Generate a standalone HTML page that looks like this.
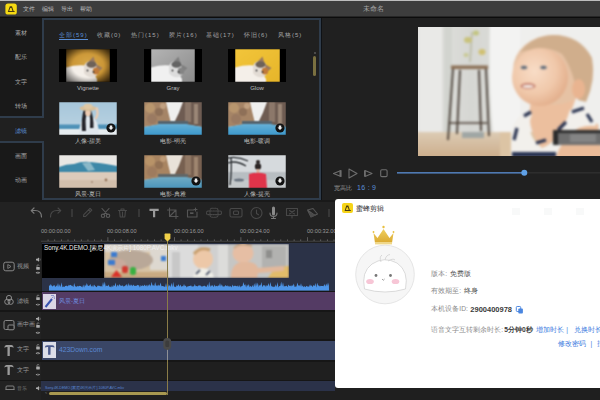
<!DOCTYPE html>
<html><head><meta charset="utf-8">
<style>
*{margin:0;padding:0;box-sizing:border-box}
html,body{width:600px;height:400px;overflow:hidden;background:#1c1c1c;font-family:"Liberation Sans",sans-serif;color:#cfcfcf}
.a{position:absolute}
.t{position:absolute;white-space:nowrap;line-height:1}
</style></head><body>
<!-- title bar -->
<div class="a" style="left:0;top:0;width:600px;height:2px;background:#bdbdbd"></div>
<div class="a" style="left:0;top:1px;width:600px;height:16px;background:#3d3d3d"></div>
<div class="a" style="left:0;top:16px;width:600px;height:1px;background:#262626"></div><div class="a" style="left:0;top:17px;width:600px;height:1px;background:#0c0c0c"></div>
<svg class="a" style="left:5px;top:3px" width="12" height="12" viewBox="0 0 12 12"><rect x="0.4" y="0.4" width="11.4" height="11.2" rx="2.6" fill="#f6da12"/><path d="M4.8 3.2 L7 3.2 L8.6 8 L10 8.3 L9.4 9 L2.8 9 Z M5.3 5 L4.2 8 L7.4 8 L6.5 5Z" fill="#4a3c10" fill-rule="evenodd"/></svg>
<div class="t" style="left:23px;top:6px;font-size:6px;color:#bdbdbd">文件</div>
<div class="t" style="left:42px;top:6px;font-size:6px;color:#bdbdbd">编辑</div>
<div class="t" style="left:61px;top:6px;font-size:6px;color:#bdbdbd">导出</div>
<div class="t" style="left:80px;top:6px;font-size:6px;color:#bdbdbd">帮助</div>
<div class="t" style="left:363px;top:5px;font-size:7px;color:#a8a8a8">未命名</div>

<!-- sidebar -->
<div class="a" style="left:0;top:18px;width:44px;height:100px;background:#191919;border-right:2px solid #2f3c4b;border-bottom:2px solid #2f3c4b"></div>
<div class="a" style="left:0;top:118px;width:44px;height:23px;background:#202020"></div>
<div class="a" style="left:0;top:141px;width:44px;height:59px;background:#191919;border-right:2px solid #2f3c4b;border-top:2px solid #2f3c4b"></div>
<div class="t" style="left:15px;top:30px;font-size:6px;color:#a9a9a9">素材</div>
<div class="t" style="left:15px;top:54px;font-size:6px;color:#a9a9a9">配乐</div>
<div class="t" style="left:15px;top:79px;font-size:6px;color:#a9a9a9">文字</div>
<div class="t" style="left:15px;top:103px;font-size:6px;color:#a9a9a9">转场</div>
<div class="t" style="left:15px;top:128px;font-size:6px;color:#5b8fd6">滤镜</div>
<div class="t" style="left:15px;top:153px;font-size:6px;color:#a9a9a9">画面</div>
<div class="t" style="left:15px;top:177px;font-size:6px;color:#a9a9a9">动画</div>

<!-- filter panel -->
<div class="a" style="left:44px;top:18px;width:277px;height:182px;background:#202020;border-top:2px solid #2f3c4b;border-right:2px solid #2f3c4b;border-bottom:2px solid #2f3c4b"></div>
<div class="a" style="left:321px;top:18px;width:1.5px;height:183px;background:#0e1115"></div>
<!-- tabs -->
<div class="t" style="left:59px;top:32px;font-size:6px;color:#5b8fd6;letter-spacing:1px">全部(59)</div>
<div class="a" style="left:59px;top:39px;width:29px;height:1px;background:#5b8fd6"></div>
<div class="t" style="left:97px;top:32px;font-size:6px;color:#a5a5a5;letter-spacing:1px">收藏(0)</div>
<div class="t" style="left:131px;top:32px;font-size:6px;color:#a5a5a5;letter-spacing:1px">热门(15)</div>
<div class="t" style="left:169px;top:32px;font-size:6px;color:#a5a5a5;letter-spacing:1px">胶片(16)</div>
<div class="t" style="left:206px;top:32px;font-size:6px;color:#a5a5a5;letter-spacing:1px">基础(17)</div>
<div class="t" style="left:244px;top:32px;font-size:6px;color:#a5a5a5;letter-spacing:1px">怀旧(6)</div>
<div class="t" style="left:278px;top:32px;font-size:6px;color:#a5a5a5;letter-spacing:1px">风格(5)</div>
<!-- scrollbar -->
<div class="a" style="left:313px;top:56px;width:3px;height:20px;background:#7a7040;border-radius:1.5px"></div>
<div class="a" style="left:314px;top:52px;width:1.5px;height:1.5px;background:#4a4a4a"></div>

<svg class="a" style="left:0;top:0" width="600" height="400" viewBox="0 0 600 400">
<defs>
<filter id="bl" x="-10%" y="-10%" width="120%" height="120%" color-interpolation-filters="sRGB"><feConvolveMatrix order="3" kernelMatrix="1 2 1 2 4 2 1 2 1" edgeMode="duplicate"/></filter>
<radialGradient id="vig" cx="50%" cy="50%" r="65%"><stop offset="55%" stop-color="#000" stop-opacity="0"/><stop offset="100%" stop-color="#000" stop-opacity="0.6"/></radialGradient>
<radialGradient id="gold" cx="50%" cy="45%" r="70%"><stop offset="0" stop-color="#d8a848"/><stop offset="0.6" stop-color="#c99434"/><stop offset="1" stop-color="#8a6020"/></radialGradient>
<linearGradient id="gray" x1="0" y1="0" x2="1" y2="1"><stop offset="0" stop-color="#b4b4b4"/><stop offset="1" stop-color="#8a8a8a"/></linearGradient>
<linearGradient id="glow" x1="0" y1="0" x2="1" y2="1"><stop offset="0" stop-color="#f2c53a"/><stop offset="1" stop-color="#e6b52a"/></linearGradient>
<clipPath id="c1"><rect x="66" y="49" width="44" height="33"/></clipPath>
<clipPath id="c2"><rect x="151" y="49" width="44" height="33"/></clipPath>
<clipPath id="c3"><rect x="235" y="49" width="45" height="33"/></clipPath>
<g id="cat">
  <path d="M0 18.5 Q10 15.5 19 16.5 L26 22 L31 30 L31 33 L0 33Z" fill="#f4efe9"/>
  <path d="M18 17 Q20 12 25 12 Q31 13 33 19 Q33 26 28 28 Q21 29 18 24Z" fill="#e2dbd4"/>
  <path d="M20.5 15 L27.5 7.5 L29.5 14Z" fill="#9a7a60"/>
  <path d="M30 15 L36.5 19 L31 24Z" fill="#9a7a60"/>
  <ellipse cx="25.5" cy="15.5" rx="5" ry="3.2" fill="#6e6258"/>
  <ellipse cx="30" cy="22" rx="3.2" ry="3.6" fill="#c07a3a"/>
  <circle cx="21.5" cy="21.5" r="0.9" fill="#3a3a3a"/><circle cx="27.5" cy="23" r="0.9" fill="#3a3a3a"/>
</g>
</defs>
<!-- row1 -->
<rect x="59" y="49" width="58" height="33" fill="#000"/>
<g clip-path="url(#c1)" filter="url(#bl)"><rect x="66" y="49" width="44" height="33" fill="url(#gold)"/><use href="#cat" x="66" y="49"/><rect x="66" y="49" width="44" height="33" fill="url(#vig)"/></g>
<rect x="144" y="49" width="58" height="33" fill="#000"/>
<g clip-path="url(#c2)" filter="url(#bl)"><rect x="151" y="49" width="44" height="33" fill="url(#gray)"/><g style="filter:grayscale(1)"><use href="#cat" x="151" y="49"/></g></g>
<rect x="228" y="49" width="58" height="33" fill="#000"/>
<g clip-path="url(#c3)" filter="url(#bl)"><rect x="235" y="49" width="45" height="33" fill="url(#glow)"/><use href="#cat" x="235" y="49"/></g>
</svg>
<div class="t" style="left:59px;top:85px;width:58px;text-align:center;font-size:6px;color:#bdbdbd">Vignette</div>
<div class="t" style="left:144px;top:85px;width:58px;text-align:center;font-size:6px;color:#bdbdbd">Gray</div>
<div class="t" style="left:228px;top:85px;width:58px;text-align:center;font-size:6px;color:#bdbdbd">Glow</div>


<svg class="a" style="left:0;top:0" width="600" height="400" viewBox="0 0 600 400">
<defs>
<filter id="bl2" x="-10%" y="-10%" width="120%" height="120%" color-interpolation-filters="sRGB"><feConvolveMatrix order="3" kernelMatrix="1 2 1 2 4 2 1 2 1" edgeMode="duplicate"/></filter>
<linearGradient id="sky1" x1="0" y1="0" x2="0" y2="1"><stop offset="0" stop-color="#a6c6da"/><stop offset="0.7" stop-color="#b6d0e0"/><stop offset="1" stop-color="#c6dae6"/></linearGradient>
<linearGradient id="road" x1="0" y1="0" x2="0" y2="1"><stop offset="0" stop-color="#6cb4d8"/><stop offset="1" stop-color="#3c98cc"/></linearGradient>
<clipPath id="r2c1"><rect x="59" y="102" width="58" height="33"/></clipPath>
<clipPath id="r2c2"><rect x="144" y="102" width="58" height="33"/></clipPath>
<clipPath id="r2c3"><rect x="228" y="102" width="58" height="33"/></clipPath>
<clipPath id="r3c1"><rect x="59" y="155" width="58" height="33"/></clipPath>
<clipPath id="r3c2"><rect x="144" y="155" width="58" height="33"/></clipPath>
<clipPath id="r3c3"><rect x="228" y="155" width="58" height="33"/></clipPath>
<g id="street">
  <rect x="0" y="0" width="58" height="33" fill="#efefee"/>
  <path d="M0 0 L22 0 Q24 10 27 21 L0 25Z" fill="#a58466"/>
  <circle cx="6" cy="6" r="5" fill="#b8966e"/><circle cx="15" cy="10" r="4" fill="#8e7058"/><circle cx="8" cy="17" r="5" fill="#9a7a62"/><circle cx="19" cy="4" r="3" fill="#c0a080"/>
  <path d="M39 0 L58 0 L58 25 L30 21 Q35 12 39 0Z" fill="#6e5c52"/>
  <rect x="41" y="0" width="6" height="20" fill="#8c786a"/>
  <rect x="50" y="2" width="4" height="20" fill="#9a8676"/>
  <path d="M0 25 L24 20.5 L34 20.5 L58 25 L58 33 L0 33Z" fill="url(#road)"/>
  <rect x="14" y="19" width="30" height="3" fill="#55646e"/>
</g>
<g id="dl"><circle cx="0" cy="0" r="4.6" fill="#111"/><path d="M-1.2 -2.5 h2.4 v2 h1.3 l-2.5 2.6 l-2.5 -2.6 h1.3z" fill="#eee"/></g>
</defs>
<!-- row2 col1 girl -->
<g clip-path="url(#r2c1)" filter="url(#bl2)">
  <rect x="59" y="102" width="58" height="33" fill="url(#sky1)"/>
  <rect x="59" y="124.5" width="58" height="4.5" fill="#4f92b8"/>
  <rect x="59" y="129" width="58" height="6" fill="#e6ecef"/>
  <path d="M79 135 Q79 120 86 117 L92 117 Q99 120 99 135Z" fill="#dfe6ec"/>
  <path d="M84 109 Q81 118 82 131 L86 131 Q85 120 86.5 111Z" fill="#24242a"/>
  <path d="M90.5 109 Q94 118 93.5 128 L90 128 Q90.5 120 89.5 111Z" fill="#24242a"/>
  <ellipse cx="88" cy="112.8" rx="2.9" ry="3.6" fill="#eccbb2"/>
  <ellipse cx="88" cy="108.3" rx="8.5" ry="2.6" fill="#d8c09a"/>
  <ellipse cx="88" cy="106.3" rx="4.5" ry="2.6" fill="#dfc8a4"/>
  <path d="M95.5 119 Q99 114 96.5 107.5" stroke="#eccbb2" stroke-width="2.2" fill="none"/>
</g>
<use href="#dl" x="111" y="128"/>
<!-- row2 col2 street -->
<g clip-path="url(#r2c2)" filter="url(#bl2)"><use href="#street" x="144" y="102"/></g>
<g clip-path="url(#r2c3)" filter="url(#bl2)"><use href="#street" x="228" y="102"/></g>
<use href="#dl" x="280" y="128"/>
<!-- row3 col1 desert -->
<g clip-path="url(#r3c1)" filter="url(#bl2)">
  <rect x="59" y="155" width="58" height="33" fill="#e9e7e4"/>
  <path d="M59 167 Q66 164 74 164 Q82 161 90 162 Q100 163 106 164 Q112 165 117 166 L117 173 L59 173Z" fill="#3e88a8"/>
  <path d="M82 163 L90 162 L95 170 L88 171Z" fill="#8ab8c8"/>
  <rect x="59" y="172" width="58" height="16" fill="#dccbbb"/>
  <rect x="59" y="180" width="58" height="8" fill="#d2bfac"/>
  <circle cx="106" cy="180" r="1.4" fill="#9a7a60"/><circle cx="92" cy="182" r="1" fill="#a8907a"/>
</g>
<g clip-path="url(#r3c2)" filter="url(#bl2)"><use href="#street" x="144" y="155"/><rect x="144" y="155" width="58" height="33" fill="#c08040" opacity="0.12"/></g>
<use href="#dl" x="196" y="181"/>
<!-- row3 col3 red woman -->
<g clip-path="url(#r3c3)" filter="url(#bl2)">
  <rect x="228" y="155" width="58" height="33" fill="#d6dadd"/>
  <rect x="228" y="172" width="58" height="16" fill="#b8bec2"/>
  <rect x="228" y="180" width="58" height="8" fill="#c4c8ca"/>
  <path d="M228 158 Q238 156 248 161 M228 163 Q236 160 246 166 M231 157 Q232 170 230 185" stroke="#2c3034" stroke-width="1.3" fill="none"/>
  <ellipse cx="239" cy="180" rx="5" ry="1.6" fill="#6a7480"/>
  <circle cx="258" cy="166.5" r="3.2" fill="#2c2626"/>
  <circle cx="258" cy="162" r="2" fill="#2c2626"/>
  <rect x="256.5" y="169" width="3" height="4" fill="#d8b09a"/>
  <path d="M249 174 Q258 171.5 266 174 L267 188 L249 188Z" fill="#e0344a"/>
</g>
<use href="#dl" x="280" y="181"/>
</svg>
<div class="t" style="left:59px;top:138px;width:58px;text-align:center;font-size:6px;color:#bdbdbd">人像-甜美</div>
<div class="t" style="left:144px;top:138px;width:58px;text-align:center;font-size:6px;color:#bdbdbd">电影-明亮</div>
<div class="t" style="left:228px;top:138px;width:58px;text-align:center;font-size:6px;color:#bdbdbd">电影-暖调</div>
<div class="t" style="left:59px;top:191px;width:58px;text-align:center;font-size:6px;color:#bdbdbd">风景-夏日</div>
<div class="t" style="left:144px;top:191px;width:58px;text-align:center;font-size:6px;color:#bdbdbd">电影-典雅</div>
<div class="t" style="left:228px;top:191px;width:58px;text-align:center;font-size:6px;color:#bdbdbd">人像-提亮</div>

<!-- preview panel -->
<div class="a" style="left:322px;top:18px;width:278px;height:182px;background:#202020"></div>
<svg class="a" style="left:418px;top:27px" width="182" height="129" viewBox="418 27 182 129">
<defs>
<filter id="bb" x="-5%" y="-5%" width="110%" height="110%" color-interpolation-filters="sRGB"><feConvolveMatrix order="3" kernelMatrix="1 2 1 2 4 2 1 2 1" edgeMode="duplicate"/><feConvolveMatrix order="3" kernelMatrix="1 2 1 2 4 2 1 2 1" edgeMode="duplicate"/><feConvolveMatrix order="3" kernelMatrix="1 2 1 2 4 2 1 2 1" edgeMode="duplicate"/></filter>
<linearGradient id="wall" x1="0" y1="0" x2="1" y2="0"><stop offset="0" stop-color="#e6e6e4"/><stop offset="0.15" stop-color="#dededb"/><stop offset="0.3" stop-color="#d6d7d3"/><stop offset="0.5" stop-color="#dcdcd8"/><stop offset="1" stop-color="#e8e8e6"/></linearGradient>
<linearGradient id="floor" x1="0" y1="0" x2="0" y2="1"><stop offset="0" stop-color="#dccbb4"/><stop offset="1" stop-color="#c9a884"/></linearGradient>
<radialGradient id="skin" cx="40%" cy="40%" r="65%"><stop offset="0" stop-color="#f8dcc6"/><stop offset="0.6" stop-color="#f0c8aa"/><stop offset="1" stop-color="#e2ad8a"/></radialGradient>
</defs>
<g filter="url(#bb)">
<rect x="410" y="20" width="200" height="145" fill="url(#wall)"/>
<rect x="420" y="20" width="22" height="120" fill="#e9e9e7"/>
<rect x="444" y="20" width="8" height="120" fill="#d2d4cf"/>
<path d="M490 20 L540 20 L540 150 L495 150 Q488 100 490 20Z" fill="#f3f3f2"/>
<rect x="410" y="132" width="100" height="30" fill="url(#floor)"/>
<!-- plant -->
<path d="M472 32 L470 62" stroke="#b8b8a0" stroke-width="1.5"/><ellipse cx="468" cy="40" rx="4" ry="3" fill="#c9c27a"/><ellipse cx="476" cy="33" rx="3" ry="2.5" fill="#c2c47e"/><ellipse cx="482" cy="52" rx="3.5" ry="3" fill="#d0c070"/><ellipse cx="466" cy="55" rx="2.5" ry="2" fill="#c8c890"/>
<!-- stool -->
<rect x="451" y="65.5" width="37" height="3.5" fill="#8a6e54"/>
<path d="M453 69 L448 140 M460 70 L457 134 M479 70 L481 131 M486 69 L489 136" stroke="#3e332b" stroke-width="1.8" fill="none"/>
<path d="M450 123 L487 123" stroke="#46382e" stroke-width="1.6"/>
<rect x="462" y="132" width="22" height="6" fill="#9fa6a4"/>
<!-- baby -->
<rect x="520" y="20" width="90" height="115" fill="#efefed"/>
<rect x="500" y="132" width="110" height="30" fill="#dcc4a4"/>
<!-- chest/neck skin -->
<path d="M532 96 Q524 128 542 148 Q562 140 576 98Z" fill="#ecbf9e"/>
<!-- arm right -->
<path d="M560 126 Q580 118 598 124 L602 160 L550 160Z" fill="#eabb98"/>
<!-- tank top -->
<path d="M511 157 L511 132 Q514 118 526 112 L532 114 Q524 134 542 148 Q560 142 570 110 L584 106 Q594 112 596 126 Q580 124 570 134 Q558 148 556 157Z" fill="#f2f0ec"/>
<path d="M514 140 L517 128 M524 116 L531 112 M536 143 L546 140 M558 130 L566 122 M572 112 L584 108 M587 114 L592 122" stroke="#26304e" stroke-width="3.2" fill="none"/>
<rect x="512" y="152" width="44" height="5" fill="#243050"/>
<!-- back of head hair -->
<ellipse cx="553" cy="70" rx="40" ry="35" fill="#e6c2a4"/>
<path d="M520 52 Q532 36 553 35 Q580 35 592 58 Q596 80 586 102 L578 100 Q574 70 562 54 Q548 44 520 52Z" fill="#d0ae8c"/>
<!-- face -->
<ellipse cx="540" cy="77" rx="28" ry="29" fill="url(#skin)"/>
<ellipse cx="578.6" cy="89" rx="6.5" ry="10" fill="#e9b490"/>
<ellipse cx="524" cy="67.5" rx="3.2" ry="1.7" fill="#5a6878"/>
<ellipse cx="543.5" cy="67.5" rx="3.2" ry="1.7" fill="#5a6878"/>
<ellipse cx="528" cy="86" rx="7.5" ry="3" fill="#c07868"/>
<ellipse cx="528" cy="86.3" rx="5.5" ry="1.6" fill="#f4ece6"/>
<rect x="553" y="130" width="50" height="15" fill="#6e6e6e"/>
<rect x="553" y="130" width="50" height="3" fill="#2a2a2a"/>
<rect x="553" y="130" width="5" height="15" fill="#2a2a2a"/>
<rect x="570" y="134" width="26" height="8" fill="#858585"/>
</g>
</svg>


<svg class="a" style="left:322px;top:160px" width="278" height="40" viewBox="322 160 278 40">
<g fill="none" stroke="#6e6e6e" stroke-width="1.1" stroke-linejoin="round">
<path d="M341 170.5 L333.5 173.5 L341 176.5Z"/><rect x="339.5" y="170.5" width="1.6" height="6" fill="#6e6e6e" stroke="none"/>
<path d="M349 169 L357 173.5 L349 178Z"/>
<path d="M365 170.5 L372 173.5 L365 176.5Z"/><rect x="364" y="170.5" width="1.6" height="6" fill="#6e6e6e" stroke="none"/>
<rect x="380.7" y="169.8" width="6.4" height="6.8" rx="1.2"/>
</g>
<rect x="397" y="172.2" width="127" height="1.3" fill="#5b8fd6"/>
<rect x="524" y="172.5" width="80" height="0.8" fill="#3a3a3a"/>
<circle cx="524.3" cy="172.8" r="3" fill="#5fa0e6"/>
</svg>
<div class="t" style="left:334px;top:185px;font-size:6px;color:#9a9a9a">宽高比</div>
<div class="t" style="left:357px;top:184px;font-size:7px;color:#5b8fd6;letter-spacing:0.3px">16 : 9</div>

<!-- toolbar -->
<div class="a" style="left:0;top:200px;width:600px;height:2px;background:#191919"></div>
<div class="a" style="left:0;top:202px;width:600px;height:40px;background:#222"></div>


<svg class="a" style="left:0;top:201px" width="600" height="41" viewBox="0 201 600 41">
<g fill="none" stroke-linecap="round" stroke-linejoin="round" stroke-width="1.1">
<!-- undo -->
<path d="M41.5 217 Q41.5 210.5 35 210.5 L32 210.5" stroke="#7a7a7a" stroke-width="1.2"/>
<path d="M34 208 L31.2 210.6 L34 213.2" stroke="#7a7a7a" stroke-width="1.2"/>
<!-- redo -->
<path d="M50.5 217 Q50.5 210.5 57 210.5 L60 210.5" stroke="#484848"/>
<path d="M58 208 L60.8 210.6 L58 213.2" stroke="#484848"/>
<path d="M72 209.5 L72 216.5" stroke="#4a4a4a"/>
<!-- pencil -->
<path d="M83.5 216.5 L83.8 214.6 L90 208.4 L91.8 210.2 L85.6 216.4Z M88.6 209.8 L90.4 211.6" stroke="#484848"/>
<!-- scissors -->
<path d="M102 208.5 L107.5 214.5 M109 208.5 L103.5 214.5" stroke="#5a5a5a"/>
<circle cx="103" cy="215.8" r="1.7" stroke="#5a5a5a"/><circle cx="108" cy="215.8" r="1.7" stroke="#5a5a5a"/>
<!-- trash -->
<path d="M118.5 210.5 L126.5 210.5 M121 210.5 L121 209 L124 209 L124 210.5 M119.5 210.5 L120.2 217 L124.8 217 L125.5 210.5 M122.5 212 L122.5 216" stroke="#484848"/>
<path d="M139 209.5 L139 216.5" stroke="#4a4a4a"/>
<!-- T -->
<path d="M149.5 209.8 L158.7 209.8 M154.1 209.8 L154.1 217.2" stroke="#9a9a9a" stroke-width="2.2" stroke-linecap="butt"/>
<!-- crop -->
<path d="M169.5 208 L169.5 216.5 L178 216.5 M167.5 210 L176 210 L176 218.5 M169.5 216.5 L176 210" stroke="#555"/>
<!-- plus box -->
<path d="M187.5 210 L187.5 217 L197 217 L197 212 M187.5 210 L194 210 M192 213.5 L192 213.5" stroke="#555"/>
<path d="M195.5 208 L195.5 211 M194 209.5 L197 209.5" stroke="#555"/>
<rect x="190" y="212.5" width="3.5" height="1.2" fill="#666" stroke="none"/>
<!-- dashed cross -->
<rect x="210" y="208.2" width="8" height="9" rx="2" stroke="#484848" stroke-dasharray="1.5 1"/>
<rect x="206.5" y="211" width="15" height="3.6" rx="1.5" stroke="#484848" stroke-dasharray="1.5 1"/>
<!-- rect -->
<rect x="230" y="208.5" width="12" height="8.5" rx="1.5" stroke="#484848"/>
<rect x="233.5" y="211" width="5" height="3.5" rx="1" stroke="#484848"/>
<!-- clock -->
<circle cx="256.5" cy="213" r="5.5" stroke="#484848"/>
<path d="M256.5 210 L256.5 213.5 L258.5 214.8" stroke="#484848"/>
<!-- mic -->
<path d="M273.5 208 L273.5 214" stroke="#8a8a8a" stroke-width="3"/>
<path d="M270 213 Q270 216.5 273.5 216.5 Q277 216.5 277 213 M273.5 216.5 L273.5 218.5 M271.5 218.5 L275.5 218.5" stroke="#7a7a7a"/>
<!-- screen -->
<path d="M286.5 208.5 L297.5 208.5 L297.5 215.5 L286.5 215.5Z M292 215.5 L292 218 M289.5 210.5 L294.5 214 M294.5 210.5 L289.5 214" stroke="#484848"/>
<!-- paint -->
<path d="M307.5 210 L313 208.5 L317.5 214 L311 217 Z M308 210.5 L315 215.5" stroke="#555"/>
<path d="M309 212 L316 215.5 L311 217Z" fill="#4a4a4a" stroke="none"/>
<path d="M329 209.5 L329 216.5" stroke="#4a4a4a"/>
</g>
<!-- ruler -->
<rect x="41" y="240.8" width="300" height="0.8" fill="#4a4a4a"/>
<rect x="47.65" y="239.40" width="0.8" height="1.6" fill="#6a6a6a"/><rect x="54.30" y="239.40" width="0.8" height="1.6" fill="#6a6a6a"/><rect x="60.95" y="239.40" width="0.8" height="1.6" fill="#6a6a6a"/><rect x="67.60" y="239.40" width="0.8" height="1.6" fill="#6a6a6a"/><rect x="74.25" y="239.40" width="0.8" height="1.6" fill="#6a6a6a"/><rect x="80.90" y="239.40" width="0.8" height="1.6" fill="#6a6a6a"/><rect x="87.55" y="239.40" width="0.8" height="1.6" fill="#6a6a6a"/><rect x="94.20" y="239.40" width="0.8" height="1.6" fill="#6a6a6a"/><rect x="100.85" y="239.40" width="0.8" height="1.6" fill="#6a6a6a"/><rect x="107.50" y="237.20" width="0.8" height="3.8" fill="#6a6a6a"/><rect x="114.15" y="239.40" width="0.8" height="1.6" fill="#6a6a6a"/><rect x="120.80" y="239.40" width="0.8" height="1.6" fill="#6a6a6a"/><rect x="127.45" y="239.40" width="0.8" height="1.6" fill="#6a6a6a"/><rect x="134.10" y="239.40" width="0.8" height="1.6" fill="#6a6a6a"/><rect x="140.75" y="239.40" width="0.8" height="1.6" fill="#6a6a6a"/><rect x="147.40" y="239.40" width="0.8" height="1.6" fill="#6a6a6a"/><rect x="154.05" y="239.40" width="0.8" height="1.6" fill="#6a6a6a"/><rect x="160.70" y="239.40" width="0.8" height="1.6" fill="#6a6a6a"/><rect x="167.35" y="239.40" width="0.8" height="1.6" fill="#6a6a6a"/><rect x="174.00" y="237.20" width="0.8" height="3.8" fill="#6a6a6a"/><rect x="180.65" y="239.40" width="0.8" height="1.6" fill="#6a6a6a"/><rect x="187.30" y="239.40" width="0.8" height="1.6" fill="#6a6a6a"/><rect x="193.95" y="239.40" width="0.8" height="1.6" fill="#6a6a6a"/><rect x="200.60" y="239.40" width="0.8" height="1.6" fill="#6a6a6a"/><rect x="207.25" y="239.40" width="0.8" height="1.6" fill="#6a6a6a"/><rect x="213.90" y="239.40" width="0.8" height="1.6" fill="#6a6a6a"/><rect x="220.55" y="239.40" width="0.8" height="1.6" fill="#6a6a6a"/><rect x="227.20" y="239.40" width="0.8" height="1.6" fill="#6a6a6a"/><rect x="233.85" y="239.40" width="0.8" height="1.6" fill="#6a6a6a"/><rect x="240.50" y="237.20" width="0.8" height="3.8" fill="#6a6a6a"/><rect x="247.15" y="239.40" width="0.8" height="1.6" fill="#6a6a6a"/><rect x="253.80" y="239.40" width="0.8" height="1.6" fill="#6a6a6a"/><rect x="260.45" y="239.40" width="0.8" height="1.6" fill="#6a6a6a"/><rect x="267.10" y="239.40" width="0.8" height="1.6" fill="#6a6a6a"/><rect x="273.75" y="239.40" width="0.8" height="1.6" fill="#6a6a6a"/><rect x="280.40" y="239.40" width="0.8" height="1.6" fill="#6a6a6a"/><rect x="287.05" y="239.40" width="0.8" height="1.6" fill="#6a6a6a"/><rect x="293.70" y="239.40" width="0.8" height="1.6" fill="#6a6a6a"/><rect x="300.35" y="239.40" width="0.8" height="1.6" fill="#6a6a6a"/><rect x="307.00" y="237.20" width="0.8" height="3.8" fill="#6a6a6a"/><rect x="313.65" y="239.40" width="0.8" height="1.6" fill="#6a6a6a"/><rect x="320.30" y="239.40" width="0.8" height="1.6" fill="#6a6a6a"/><rect x="326.95" y="239.40" width="0.8" height="1.6" fill="#6a6a6a"/><rect x="333.60" y="239.40" width="0.8" height="1.6" fill="#6a6a6a"/>
</svg>
<div class="t" style="left:41px;top:228.8px;font-size:5.6px;color:#9a9a9a;font-family:'Liberation Sans',sans-serif">00:00:00.00</div>
<div class="t" style="left:107px;top:228.8px;font-size:5.6px;color:#9a9a9a">00:00:08.00</div>
<div class="t" style="left:174px;top:228.8px;font-size:5.6px;color:#9a9a9a">00:00:16.00</div>
<div class="t" style="left:240px;top:228.8px;font-size:5.6px;color:#9a9a9a">00:00:24.00</div>
<div class="t" style="left:307px;top:228.8px;font-size:5.6px;color:#9a9a9a">00:00:32.00</div>

<!-- tracks -->
<div class="a" style="left:0;top:242px;width:600px;height:158px;background:#1f1f1f"></div>
<div class="a" style="left:0;top:242px;width:41px;height:158px;background:#222"></div>
<!-- separators -->
<div class="a" style="left:0;top:291px;width:335px;height:1.5px;background:#161616"></div>
<div class="a" style="left:0;top:310px;width:335px;height:1.5px;background:#161616"></div>
<div class="a" style="left:0;top:339px;width:335px;height:1.5px;background:#161616"></div>
<div class="a" style="left:0;top:360px;width:335px;height:1.5px;background:#161616"></div>
<div class="a" style="left:0;top:379.8px;width:335px;height:1.5px;background:#161616"></div>

<!-- video track -->
<div class="a" style="left:42px;top:243px;width:293px;height:48px;background:#2b3247"></div>
<div class="a" style="left:42px;top:244px;width:62px;height:34px;background:#000"></div>
<svg class="a" style="left:42px;top:243px" width="293" height="48" viewBox="42 243 293 48">
<defs>
<filter id="tb" x="-5%" y="-5%" width="110%" height="110%" color-interpolation-filters="sRGB"><feConvolveMatrix order="3" kernelMatrix="1 2 1 2 4 2 1 2 1" edgeMode="duplicate"/><feConvolveMatrix order="3" kernelMatrix="1 2 1 2 4 2 1 2 1" edgeMode="duplicate"/></filter>
<clipPath id="clipf"><rect x="104" y="244" width="185" height="34"/></clipPath>
</defs>
<g clip-path="url(#clipf)" filter="url(#tb)">
<!-- frame 1 toys -->
<rect x="104" y="244" width="64" height="34" fill="#d6c2a4"/>
<rect x="104" y="244" width="64" height="8" fill="#ddd6cc"/>
<rect x="150" y="244" width="18" height="26" fill="#ddd8d0"/>
<ellipse cx="131" cy="260" rx="22" ry="10" fill="#b9a898"/>
<ellipse cx="118" cy="264" rx="8" ry="5" fill="#c8aa9c"/>
<rect x="104" y="272" width="64" height="6" fill="#c9aa82"/>
<path d="M111 277 L116.5 270 L122 277Z" fill="#d83028"/>
<rect x="122" y="266" width="6" height="7" rx="2" fill="#d03a30"/>
<rect x="130" y="267" width="6" height="8" rx="2.5" fill="#38b040"/>
<rect x="111" y="252" width="6" height="5" fill="#3a7ad0"/>
<rect x="108" y="260" width="7" height="5" fill="#3a7ad0"/>
<rect x="161" y="256" width="5" height="5" fill="#3a7ad0"/>
<!-- frame 2 -->
<rect x="168" y="244" width="50" height="34" fill="#dcdcdc"/>
<rect x="172" y="252" width="8" height="26" fill="#c8c8c8"/>
<rect x="198" y="244" width="20" height="34" fill="#d0d0d0"/>
<ellipse cx="203" cy="259" rx="10" ry="10" fill="#edc8a8"/>
<path d="M194 254 Q200 246 210 250" stroke="#c8a070" stroke-width="3" fill="none"/>
<path d="M193 278 Q195 268 202 268 Q212 268 214 278Z" fill="#f0efe8"/>
<path d="M196 274 L200 270 M206 275 L210 271" stroke="#2a3550" stroke-width="1.6"/>
<!-- frame 3 -->
<rect x="218" y="244" width="71" height="34" fill="#c6c6c4"/>
<rect x="218" y="244" width="10" height="34" fill="#dcdcda"/>
<rect x="262" y="246" width="24" height="22" fill="#b2b2b0"/>
<rect x="266" y="250" width="6" height="8" fill="#8e8e8c"/>
<path d="M268 278 Q274 266 289 266 L289 278Z" fill="#e2bc6a"/>
<ellipse cx="243" cy="253" rx="10.5" ry="10" fill="#e6bea4"/>
<path d="M234 248 Q240 242 252 246" stroke="#c8a888" stroke-width="2" fill="none"/>
<path d="M231 278 Q231 264 241 262 L250 262 Q256 263 258 268 L283 266 Q286 268 283 271 L258 273 L257 278Z" fill="#e2b89c"/>
</g>
<!-- waveform -->
<path id="wf" d="M49 289 L49.0 284.9 L49.9 285.9 L50.8 284.1 L51.7 285.7 L52.6 286.4 L53.5 285.6 L54.4 284.9 L55.3 287.3 L56.2 285.3 L57.1 286.4 L58.0 283.1 L58.9 286.9 L59.8 284.2 L60.7 287.2 L61.6 282.3 L62.5 287.2 L63.4 286.5 L64.3 287.1 L65.2 286.0 L66.1 285.8 L67.0 285.8 L67.9 286.4 L68.8 284.8 L69.7 285.6 L70.6 284.8 L71.5 285.7 L72.4 285.8 L73.3 287.2 L74.2 282.9 L75.1 286.3 L76.0 286.5 L76.9 286.8 L77.8 285.7 L78.7 286.5 L79.6 285.7 L80.5 286.1 L81.4 286.4 L82.3 287.5 L83.2 284.6 L84.1 287.5 L85.0 284.5 L85.9 286.3 L86.8 283.1 L87.7 285.6 L88.6 286.0 L89.5 285.6 L90.4 284.1 L91.3 286.8 L92.2 285.2 L93.1 287.3 L94.0 284.6 L94.9 285.8 L95.8 286.4 L96.7 287.3 L97.6 285.6 L98.5 285.7 L99.4 285.7 L100.3 286.4 L101.2 285.7 L102.1 287.1 L103.0 282.1 L103.9 285.5 L104.8 281.5 L105.7 286.4 L106.6 285.5 L107.5 286.3 L108.4 284.4 L109.3 286.7 L110.2 286.4 L111.1 287.4 L112.0 285.3 L112.9 287.2 L113.8 284.7 L114.7 286.2 L115.6 282.6 L116.5 287.2 L117.4 284.4 L118.3 286.6 L119.2 284.0 L120.1 285.5 L121.0 285.4 L121.9 286.0 L122.8 285.3 L123.7 286.7 L124.6 286.1 L125.5 285.5 L126.4 284.1 L127.3 286.5 L128.2 283.0 L129.1 285.9 L130.0 284.3 L130.9 285.9 L131.8 284.6 L132.7 286.2 L133.6 284.6 L134.5 286.1 L135.4 285.8 L136.3 286.0 L137.2 284.8 L138.1 285.6 L139.0 284.9 L139.9 287.5 L140.8 285.1 L141.7 286.2 L142.6 285.3 L143.5 286.2 L144.4 284.5 L145.3 286.2 L146.2 284.7 L147.1 286.8 L148.0 284.4 L148.9 286.1 L149.8 284.1 L150.7 286.5 L151.6 281.8 L152.5 285.6 L153.4 285.3 L154.3 286.1 L155.2 281.9 L156.1 286.3 L157.0 284.8 L157.9 286.3 L158.8 284.6 L159.7 286.1 L160.6 282.6 L161.5 286.2 L162.4 286.0 L163.3 286.2 L164.2 286.4 L165.1 287.0 L166.0 282.9 L166.9 287.1 L167.8 282.6 L168.7 286.7 L169.6 285.0 L170.5 287.0 L171.4 282.7 L172.3 286.9 L173.2 281.8 L174.1 286.8 L175.0 286.4 L175.9 287.3 L176.8 285.1 L177.7 286.3 L178.6 284.1 L179.5 286.7 L180.4 284.5 L181.3 286.8 L182.2 286.1 L183.1 286.4 L184.0 284.1 L184.9 286.3 L185.8 285.6 L186.7 287.5 L187.6 286.2 L188.5 286.3 L189.4 286.1 L190.3 285.7 L191.2 285.6 L192.1 287.0 L193.0 285.8 L193.9 286.7 L194.8 284.1 L195.7 286.3 L196.6 285.9 L197.5 286.5 L198.4 285.5 L199.3 285.5 L200.2 285.3 L201.1 286.5 L202.0 286.2 L202.9 286.6 L203.8 285.8 L204.7 285.8 L205.6 286.5 L206.5 287.0 L207.4 284.2 L208.3 287.0 L209.2 281.5 L210.1 286.9 L211.0 285.0 L211.9 286.2 L212.8 285.0 L213.7 287.3 L214.6 284.6 L215.5 286.4 L216.4 285.7 L217.3 286.4 L218.2 285.3 L219.1 286.0 L220.0 283.0 L220.9 286.6 L221.8 284.2 L222.7 286.4 L223.6 286.5 L224.5 286.6 L225.4 285.1 L226.3 286.2 L227.2 285.3 L228.1 286.7 L229.0 285.5 L229.9 287.1 L230.8 285.8 L231.7 287.4 L232.6 284.4 L233.5 286.6 L234.4 285.8 L235.3 285.7 L236.2 286.1 L237.1 286.4 L238.0 285.3 L238.9 287.2 L239.8 285.0 L240.7 287.4 L241.6 285.9 L242.5 285.9 L243.4 282.1 L244.3 285.5 L245.2 284.0 L246.1 287.4 L247.0 284.4 L247.9 286.2 L248.8 284.1 L249.7 287.2 L250.6 285.8 L251.5 287.2 L252.4 285.0 L253.3 287.2 L254.2 283.3 L255.1 286.7 L256.0 282.3 L256.9 286.0 L257.8 282.6 L258.7 286.9 L259.6 285.0 L260.5 285.6 L261.4 282.1 L262.3 287.2 L263.2 284.9 L264.1 285.7 L265.0 285.1 L265.9 287.0 L266.8 285.1 L267.7 286.0 L268.6 283.0 L269.5 286.8 L270.4 282.1 L271.3 286.2 L272.2 286.3 L273.1 287.3 L274.0 286.2 L274.9 287.0 L275.8 284.3 L276.7 286.9 L277.6 282.0 L278.5 287.4 L279.4 286.1 L280.3 286.1 L281.2 281.6 L282.1 286.2 L283.0 282.3 L283.9 286.8 L284.8 285.9 L285.7 286.3 L286.6 285.6 L287.5 287.2 L288.4 284.4 L289.3 285.9 L290.2 285.4 L291.1 286.5 L292.0 285.0 L292.9 286.0 L293.8 283.4 L294.7 287.1 L295.6 286.4 L296.5 286.5 L297.4 282.6 L298.3 285.7 L299.2 285.0 L300.1 286.6 L301.0 283.2 L301.9 286.8 L302.8 285.5 L303.7 287.2 L304.6 285.9 L305.5 287.2 L306.4 285.8 L307.3 286.5 L308.2 286.4 L309.1 286.8 L310.0 284.2 L310.9 286.2 L311.8 285.3 L312.7 287.3 L313.6 284.8 L314.5 286.2 L315.4 283.1 L316.3 287.5 L317.2 282.7 L318.1 285.6 L319.0 285.6 L319.9 286.6 L320.8 285.8 L321.7 286.1 L322.6 286.1 L323.5 286.2 L324.4 284.1 L325.3 286.6 L326.2 283.4 L327.1 285.9 L328.0 282.4 L328.9 285.5 L329 289 L329 290.5 L49 290.5 Z" fill="#4d95e8"/>
</svg>
<div class="t" style="left:44px;top:245px;font-size:6.3px;color:#f0f0f0">Sony.4K.DEMO.[索尼4K演示片].1080P.AVC.mkv</div>
<!-- filter track -->
<div class="a" style="left:42px;top:292px;width:293px;height:18px;background:#543b64"></div>
<div class="a" style="left:43px;top:294px;width:13px;height:15px;background:#dcd6e6"></div>
<svg class="a" style="left:43px;top:294px" width="13" height="15" viewBox="0 0 13 15"><path d="M2.5 13 L9 5" stroke="#3a52b0" stroke-width="2"/><path d="M9 3 L10 4 M11 2 L11.5 5 M8 1.5 L11 1.5" stroke="#7a86c6" stroke-width="0.8"/></svg>
<div class="t" style="left:59px;top:298px;font-size:6px;color:#6f8fe0">风景-夏日</div>
<!-- text track -->
<div class="a" style="left:42px;top:341px;width:293px;height:19px;background:#3a4666"></div>
<div class="a" style="left:43px;top:341.6px;width:13px;height:16px;background:#dcdee8"></div>
<svg class="a" style="left:43px;top:342px" width="13" height="16" viewBox="43 342 13 16"><path d="M44.8 347.6 Q45 345.2 47 345.2 L52.4 345.2 Q54.4 345.2 54.6 347.6 Q53.5 346.9 52 346.9 L50.6 346.9 L50.5 354.8 L48.1 354.8 L48.1 346.9 L47.4 346.9 Q46 346.9 44.8 347.6Z" fill="#4a5a8c"/></svg>
<div class="t" style="left:59px;top:347px;font-size:6.8px;color:#5a88d2">423Down.com</div>
<!-- audio track -->
<div class="a" style="left:41px;top:381px;width:294px;height:10px;background:#2b3249"></div>
<div class="t" style="left:45px;top:387.3px;font-size:3.6px;color:#5a86d0">Sony.4K.DEMO.[索尼4K演示片].1080P.AVC.mkv</div>
<div class="a" style="left:49px;top:392px;width:118px;height:3.3px;background:#a89850;border-radius:1.5px"></div>
<div class="t" style="left:45px;top:391px;font-size:4px;color:#777">&lt;</div>
<!-- playhead -->
<div class="a" style="left:166.8px;top:236px;width:1px;height:159px;background:#8a7c48"></div>
<svg class="a" style="left:164px;top:233px" width="7" height="9" viewBox="0 0 7 9"><path d="M0.6 1.2 Q0.6 0.6 1.2 0.6 L5.8 0.6 Q6.4 0.6 6.4 1.2 L6.4 5.8 L3.5 8.4 L0.6 5.8Z" fill="#f0d048"/></svg>
<div class="a" style="left:166.5px;top:350px;width:1.6px;height:10px;background:#8e9096"></div><svg class="a" style="left:161px;top:336px" width="12" height="16" viewBox="0 0 12 16"><rect x="2.3" y="2" width="7.9" height="11.7" rx="3.6" fill="#4a4a4a"/><rect x="4.3" y="4.5" width="3.9" height="6.5" rx="1.5" fill="#3c3c3c"/></svg>
<!-- headers -->
<svg class="a" style="left:0;top:243px" width="42" height="157" viewBox="0 243 42 157">
<g fill="none" stroke="#8a8a8a" stroke-width="1">
<rect x="3.7" y="262.2" width="10.5" height="8.6" rx="2"/>
<path d="M7.8 264.5 L11 266.5 L7.8 268.5Z" stroke-width="0.8"/>
<circle cx="9" cy="298" r="2.6"/><circle cx="7.3" cy="301.8" r="2.6"/><circle cx="10.7" cy="301.8" r="2.6"/>
<rect x="4" y="320.5" width="10" height="9" rx="1.5"/>
<rect x="8" y="325" width="6" height="4.8" rx="1" fill="#202020"/>
<path d="M6 389.5 L6 387 Q6 386 7 386 L13 386 Q14 386 14 387 L14 389.5 M5.5 389.5 L14.5 389.5" stroke-width="0.9"/>
</g>
<g fill="#9a9a9a">
<path d="M4.30 347.75 Q4.49 345.00 6.41 345.00 L11.59 345.00 Q13.51 345.00 13.70 347.75 Q12.64 346.95 11.21 346.95 L9.86 346.95 L9.77 356.00 L7.47 356.00 L7.47 346.95 L6.79 346.95 Q5.45 346.95 4.30 347.75Z"/>
<path d="M4.30 367.50 Q4.49 365.00 6.41 365.00 L11.59 365.00 Q13.51 365.00 13.70 367.50 Q12.64 366.77 11.21 366.77 L9.86 366.77 L9.77 375.00 L7.47 375.00 L7.47 366.77 L6.79 366.77 Q5.45 366.77 4.30 367.50Z"/>
</g>
<g fill="#aaa">
<path d="M36 258.8 L37.2 258.8 L39 257.40000000000003 L39 261.8 L37.2 260.40000000000003 L36 260.40000000000003Z"/><path d="M39.8 258.40000000000003 Q40.5 259.6 39.8 260.8" stroke="#aaa" stroke-width="0.5" fill="none"/><rect x="36.2" y="266.9" width="3.6" height="2.8" rx="0.4"/><path d="M37 266.9 L37 265.8 Q37 264.8 38 264.8 Q39 264.8 39 265.6" stroke="#aaa" stroke-width="0.6" fill="none"/><path d="M35.6 272.8 Q37.9 270.90000000000003 40.2 272.8 Q37.9 274.7 35.6 272.8Z"/><circle cx="37.9" cy="272.8" r="0.6" fill="#222"/><rect x="36.2" y="297.2" width="3.6" height="2.8" rx="0.4"/><path d="M37 297.2 L37 296.1 Q37 295.1 38 295.1 Q39 295.1 39 295.90000000000003" stroke="#aaa" stroke-width="0.6" fill="none"/><path d="M35.6 304.6 Q37.9 302.70000000000005 40.2 304.6 Q37.9 306.5 35.6 304.6Z"/><circle cx="37.9" cy="304.6" r="0.6" fill="#222"/><path d="M36 318.0 L37.2 318.0 L39 316.6 L39 321.0 L37.2 319.6 L36 319.6Z"/><path d="M39.8 317.6 Q40.5 318.8 39.8 320.0" stroke="#aaa" stroke-width="0.5" fill="none"/><rect x="36.2" y="324.9" width="3.6" height="2.8" rx="0.4"/><path d="M37 324.9 L37 323.8 Q37 322.8 38 322.8 Q39 322.8 39 323.6" stroke="#aaa" stroke-width="0.6" fill="none"/><path d="M35.6 332.7 Q37.9 330.8 40.2 332.7 Q37.9 334.59999999999997 35.6 332.7Z"/><circle cx="37.9" cy="332.7" r="0.6" fill="#222"/><rect x="36.2" y="346.59999999999997" width="3.6" height="2.8" rx="0.4"/><path d="M37 346.59999999999997 L37 345.5 Q37 344.5 38 344.5 Q39 344.5 39 345.3" stroke="#aaa" stroke-width="0.6" fill="none"/><path d="M35.6 353.3 Q37.9 351.40000000000003 40.2 353.3 Q37.9 355.2 35.6 353.3Z"/><circle cx="37.9" cy="353.3" r="0.6" fill="#222"/><rect x="36.2" y="366.59999999999997" width="3.6" height="2.8" rx="0.4"/><path d="M37 366.59999999999997 L37 365.5 Q37 364.5 38 364.5 Q39 364.5 39 365.3" stroke="#aaa" stroke-width="0.6" fill="none"/><path d="M35.6 374.6 Q37.9 372.70000000000005 40.2 374.6 Q37.9 376.5 35.6 374.6Z"/><circle cx="37.9" cy="374.6" r="0.6" fill="#222"/><path d="M36 387.4 L37.2 387.4 L39 386.0 L39 390.4 L37.2 389.0 L36 389.0Z"/><path d="M39.8 387.0 Q40.5 388.2 39.8 389.4" stroke="#aaa" stroke-width="0.5" fill="none"/>
</g>
</svg>
<div class="t" style="left:17px;top:263.5px;font-size:5.5px;color:#9a9a9a">视频</div>
<div class="t" style="left:17px;top:298.5px;font-size:5.5px;color:#9a9a9a">滤镜</div>
<div class="t" style="left:17px;top:322px;font-size:5.5px;color:#9a9a9a">画中画</div>
<div class="t" style="left:17px;top:346.5px;font-size:5.5px;color:#9a9a9a">文字</div>
<div class="t" style="left:17px;top:368px;font-size:5.5px;color:#9a9a9a">文字</div>
<div class="t" style="left:17px;top:386px;font-size:5px;color:#777">音乐</div>

<!-- dialog -->
<div class="a" style="left:335px;top:199px;width:280px;height:189px;background:#fff;border-radius:3px"></div>
<svg class="a" style="left:341.8px;top:202.6px" width="11" height="10" viewBox="0 0 11 10"><rect x="0" y="0" width="11" height="10" rx="2" fill="#f6d418"/><path d="M4.3 2.6 L6.3 2.6 L7.8 7 L9.2 7.3 L8.6 8 L2.6 8 Z M4.8 4.3 L3.8 7 L6.7 7 L5.9 4.3Z" fill="#4a3c10" fill-rule="evenodd"/></svg>
<div class="t" style="left:356px;top:204.5px;font-size:7px;color:#1e1e1e">蜜蜂剪辑</div>
<div class="a" style="left:512px;top:208px;width:8px;height:7px;background:#f8f9f9"></div>
<div class="a" style="left:544px;top:208px;width:8px;height:7px;background:#f8f9f9"></div>
<div class="a" style="left:576px;top:208px;width:8px;height:7px;background:#f8f9f9"></div>
<svg class="a" style="left:335px;top:199px" width="265" height="189" viewBox="335 199 265 189">
<defs>
<linearGradient id="gold2" x1="0" y1="0" x2="0" y2="1"><stop offset="0" stop-color="#f0d060"/><stop offset="1" stop-color="#d9a830"/></linearGradient>
</defs>
<circle cx="385" cy="274.5" r="29.3" fill="#f6f6f6" stroke="#e2e2e2" stroke-width="0.9"/>
<!-- bun -->
<path d="M364.5 289 Q361 272 372 264 Q384 256 397 263 Q409 271 405.5 289 Q385 295 364.5 289Z" fill="#fff" stroke="#d2d2d2" stroke-width="0.8"/>
<path d="M381 262 Q379 257 382 255 M385 260 Q386 255 390 254.5 M388 261 Q393 258 395 260" stroke="#d0d0d0" stroke-width="0.8" fill="none"/>
<circle cx="376" cy="275.5" r="1.4" fill="#777"/><circle cx="390.5" cy="275.5" r="1.4" fill="#777"/>
<path d="M382 279 Q383.3 281.5 384.6 279" stroke="#888" stroke-width="0.8" fill="none"/>
<ellipse cx="370" cy="281.5" rx="3.8" ry="2.6" fill="#f7c6d6"/>
<ellipse cx="395.5" cy="281.5" rx="3.8" ry="2.6" fill="#f7c6d6"/>
<!-- crown -->
<path d="M373.5 233 L377.5 238 L383.5 229 L389.5 238 L393.5 233 L392 243 L375 243Z" fill="url(#gold2)"/>
<circle cx="383.5" cy="227" r="1.2" fill="#e8c040"/>
<circle cx="373.5" cy="232" r="0.9" fill="#e8c040"/><circle cx="393.5" cy="232" r="0.9" fill="#e8c040"/>
<rect x="375" y="242" width="17" height="2.4" fill="#efd78a"/>
<!-- copy icon -->
<rect x="516.3" y="306.5" width="4.4" height="5" rx="0.9" fill="#fff" stroke="#4a86e0" stroke-width="1"/>
<rect x="518.3" y="308.5" width="4.6" height="5" rx="0.9" fill="#4a86e0"/>
</svg>
<div class="t" style="left:431.3px;top:271px;font-size:6.7px;color:#8a8a8a">版本:</div>
<div class="t" style="left:450px;top:271px;font-size:6.7px;color:#555">免费版</div>
<div class="t" style="left:431.3px;top:288px;font-size:6.7px;color:#8a8a8a">有效期至:</div>
<div class="t" style="left:463.7px;top:288px;font-size:6.7px;color:#555">终身</div>
<div class="t" style="left:431.3px;top:306px;font-size:6.7px;color:#8a8a8a">本机设备ID:</div>
<div class="t" style="left:470.3px;top:305.5px;font-size:7.5px;color:#3a3a3a;font-weight:bold">2900400978</div>
<div class="t" style="left:431.3px;top:327px;font-size:6.7px;color:#8a8a8a">语音文字互转剩余时长:</div>
<div class="t" style="left:504.3px;top:327px;font-size:6.7px;color:#3a3a3a;font-weight:bold">5分钟0秒</div>
<div class="t" style="left:535.8px;top:327px;font-size:6.6px;color:#3a7ae0">增加时长</div>
<div class="t" style="left:566.3px;top:327px;font-size:6.6px;color:#3a7ae0">|</div>
<div class="t" style="left:574.3px;top:327px;font-size:6.6px;color:#3a7ae0">兑换时长</div>
<div class="t" style="left:557.7px;top:341px;font-size:6.6px;color:#3a7ae0">修改密码</div>
<div class="t" style="left:590.5px;top:341px;font-size:6.6px;color:#3a7ae0">|</div>
<div class="t" style="left:596.5px;top:341px;font-size:6.6px;color:#3a7ae0">找回</div>
</body></html>
